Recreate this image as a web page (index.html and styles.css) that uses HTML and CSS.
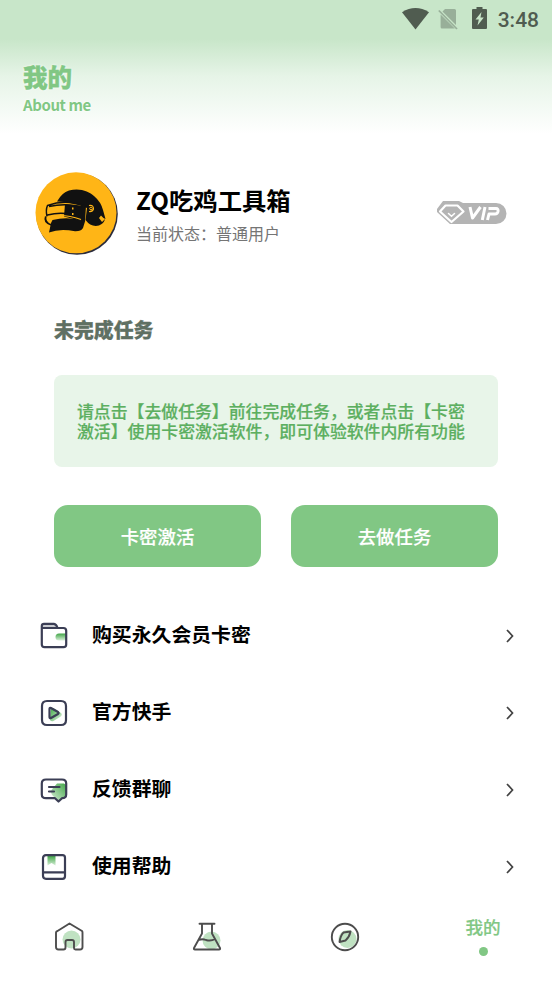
FILE: index.html
```html
<!DOCTYPE html>
<html lang="zh-CN">
<head>
<meta charset="utf-8">
<title>我的</title>
<link rel="stylesheet" href="styles.css">
</head>
<body>
<div class="screen">
  <header class="header">
    <div class="status">
      <svg class="wifi" width="27" height="22" viewBox="0 0 27 22"><path d="M0 4.2Q13.5-4 27 4.2L13.5 21.5Z"/></svg>
      <svg class="sim" width="20" height="22" viewBox="0 0 20 22"><path d="M7 1h9.5q1.500 0 1.500 1.500V17L4.500 3.500ZM2.600 6.500 16.800 20.500H4q-1.400 0-1.400-1.500Z"/><path class="slash" d="M.8 2.500 19 21"/></svg>
      <svg class="battery" width="15" height="22" viewBox="0 0 15 22"><path fill-rule="evenodd" d="M4.500 0h6v2H14q1 0 1 1v18q0 1-1 1H1q-1 0-1-1V3q0-1 1-1h3.500ZM9.500 5 3.500 12.500h3.300L5.500 18.500 11.800 10.500H8.500Z"/></svg>
      <span class="time">3:48</span>
    </div>
    <h1>我的</h1>
    <p>About me</p>
  </header>

  <section class="profile">
    <svg class="avatar" width="83" height="83" viewBox="0 0 83 83">
      <circle cx="42" cy="42" r="40.800" fill="#2b2c3c"/>
      <circle cx="41" cy="40.800" r="40.500" fill="#ffb516"/>
      <path fill="#111" d="M22 29.500Q27 20.500 34 18.500C45 15.500 54 19.500 59 24Q66 30 68 38L70.500 47Q68 46 66 43.500L64 46 67 50 70 47Q69 51.500 64 53.500 56 55.500 50.500 48L52 36Q36 30 22 29.500Z"/>
      <path fill="#111" d="M30 32 51 34.500 50 50 29 44.500Z"/>
      <path fill="none" stroke="#111" stroke-width="1.500" d="M52 34.500Q31 26.500 12.500 33.500 10.500 38 12 44.500M50 35.500Q31 30.500 14 34.500M12.500 43Q22 40.500 31 41.500"/>
      <path fill="#111" d="M11.500 45Q10.500 49 15.500 52L17.500 48Q34 44 50 49.500L48 56Q46 59.500 40 59.300 25 56 14 60.500L15.500 53.500Q7.500 50.500 10 44Z"/>
      <path fill="none" stroke="#ffb516" stroke-width="1.200" d="M13 45Q28 41 46 47.500M54 33.500Q58.500 32.500 58.500 37 57.500 40 54 39.500"/>
      <circle cx="56" cy="36.500" r="1.300" fill="none" stroke="#ffb516"/>
      <path fill="#ffb516" d="M37 35.500h1.500v2H37zM37 41h1.500v2H37z"/>
    </svg>
    <div class="who">
      <h2>ZQ吃鸡工具箱</h2>
      <p>当前状态：普通用户</p>
    </div>
    <svg class="vip" width="70" height="26" viewBox="0 0 70 26">
      <path fill="#b4b4b4" d="M6 0H22L26 2H59a10.500 10.500 0 0 1 0 21H13L0 11V8Z"/>
      <path fill="none" stroke="#fff" stroke-width="2.200" stroke-linejoin="round" d="M8.500 4.500H20.500L26.500 10.500 14.500 21 3 10.500Z"/>
      <path fill="none" stroke="#fff" stroke-width="1.500" stroke-linecap="round" d="M11.500 12.500 14.500 15.300 17.500 12.500"/>
      <path fill="none" stroke="#fff" stroke-width="3" stroke-linejoin="round" d="M33 6 35.500 17 43.500 6M48 6 45.300 19M50.500 19 52 13H58Q60.500 13 61 10.500 61.500 7.500 59 7.500H51.500"/>
    </svg>
  </section>

  <section class="task">
    <h3>未完成任务</h3>
    <div class="notice">请点击【去做任务】前往完成任务，或者点击【卡密激活】使用卡密激活软件，即可体验软件内所有功能</div>
    <div class="actions">
      <button>卡密激活</button>
      <button>去做任务</button>
    </div>
  </section>

  <svg class="defs" width="0" height="0">
    <linearGradient id="down" x1="0" y1="0" x2="0" y2="1"><stop offset="0" stop-color="#42a648"/><stop offset="1" stop-color="#d8efd9"/></linearGradient>
    <linearGradient id="diag" x1="0" y1="0" x2="1" y2="1"><stop offset="0" stop-color="#3fa946"/><stop offset="1" stop-color="#e0f3e0"/></linearGradient>
    <linearGradient id="side" x1="1" y1="0" x2="0" y2="1"><stop offset="0" stop-color="#42a648"/><stop offset="1" stop-color="#d8efd9"/></linearGradient>
  </svg>

  <ul class="menu">
    <li>
      <svg class="icon" width="28" height="28" viewBox="0 0 28 28"><path fill="#c9cbd0" d="M2 6V4Q2 2 4 2H14.500L17.500 6Z"/><path fill="url(#down)" d="M26 11.500H19q-3.500 0-3.500 3.500t3.500 3.500h7Z"/><path class="line" d="M1.800 6V4Q1.800 1.800 4 1.800H14Q16.500 2 17.500 6M1.800 6H23.500Q26.200 6 26.200 8.700V22.500Q26.200 25.200 23.500 25.200H4.500Q1.800 25.200 1.800 22.500Z"/></svg>
      <span>购买永久会员卡密</span>
      <svg class="arrow" width="10" height="16" viewBox="0 0 10 16"><path d="M2 2 7.500 8 2 14"/></svg>
    </li>
    <li>
      <svg class="icon" width="28" height="28" viewBox="0 0 28 28"><path fill="url(#diag)" d="M11 10.500Q11 8 14 9.500L21 14Q23 16 20 18L13.500 22Q10 23 10 20Z"/><path class="line" d="M7 2H21Q26 2 26 7V21Q26 26 21 26H7Q2 26 2 21V7Q2 2 7 2ZM9.500 10Q9.500 8.500 11 9L18 13Q19.200 14 18 15L11 19Q9.500 19.500 9.500 18Z"/></svg>
      <span>官方快手</span>
      <svg class="arrow" width="10" height="16" viewBox="0 0 10 16"><path d="M2 2 7.500 8 2 14"/></svg>
    </li>
    <li>
      <svg class="icon" width="28" height="28" viewBox="0 0 28 28"><path fill="url(#side)" d="M17 7.500H24Q27 9 26 13V21L19 25 13 20Q9 16 13 12Z"/><path class="line" d="M6 3.500H22Q26.200 3.500 26.200 7.500V18.500Q26.200 22.200 22 22.200L18.500 25.500 15 22.200H6Q1.800 22.200 1.800 18.500V7.500Q1.800 3.500 6 3.500ZM9 11H19.500M9 15.500H14"/></svg>
      <span>反馈群聊</span>
      <svg class="arrow" width="10" height="16" viewBox="0 0 10 16"><path d="M2 2 7.500 8 2 14"/></svg>
    </li>
    <li>
      <svg class="icon" width="28" height="28" viewBox="0 0 28 28"><path fill="url(#down)" d="M7.500 3H15.500V12.500L11.500 10 7.500 12.500Z"/><path class="line" d="M6 2.200H22.500Q25 2.200 25 4.700V23.300Q25 25.800 22.500 25.800H6Q3 25.800 3 22.800V5.200Q3 2.200 6 2.200ZM3 19.300H25"/></svg>
      <span>使用帮助</span>
      <svg class="arrow" width="10" height="16" viewBox="0 0 10 16"><path d="M2 2 7.500 8 2 14"/></svg>
    </li>
  </ul>

  <nav class="tabs">
    <a><svg width="30" height="30" viewBox="0 0 30 30"><circle class="tint" cx="17.500" cy="17.500" r="9"/><path d="M3.500 9 15.500 1.500 28 9Q28.500 9.500 28.500 10.500V25Q28.500 27.500 26 27.500H21.500Q20 27.500 20 26V20Q20 18 18 18H13.500Q11.500 18 11.500 20V25.500Q11.500 27.500 9.500 27.500H4.500Q2 27.500 2 25V10.500Q2 9.500 3.500 9Z"/></svg></a>
    <a><svg width="30" height="30" viewBox="0 0 30 30"><circle class="tint" cx="19.500" cy="18.500" r="9"/><path d="M7.500 1.800H22.500M10 2V11.500L2 26Q1.500 27.500 3 27.500H27Q28.500 27.500 28 26L20 11.500V2M7 18Q10.500 16.500 14 18 19 19.500 23 17"/></svg></a>
    <a><svg width="30" height="30" viewBox="0 0 30 30"><circle class="tint" cx="17.500" cy="17" r="9"/><circle cx="15" cy="15" r="13.200"/><path d="M20.500 9.500 13.500 10.500Q10.500 13.500 9.500 20L15.500 18.500Q19.500 15 20.500 9.500Z"/></svg></a>
    <a class="active">我的<i></i></a>
  </nav>
</div>
</body>
</html>
```
FILE: styles.css
```css
* { box-sizing: border-box; }
body, h1, h2, h3, p, ul { margin: 0; padding: 0; }
body {
  background: #fff;
  font-family: "Noto Sans CJK SC", "Noto Sans", sans-serif;
}
.screen {
  display: flex;
  flex-direction: column;
  width: 552px;
  height: 983px;
  overflow: hidden;
}
.defs { position: absolute; }

.header {
  height: 138px;
  flex: none;
  background: linear-gradient(#c8e6c9 0, #c8e6c9 39px, #e6f4e7 76px, #fff 134px);
  color: #81c784;
}
.status {
  display: flex;
  align-items: center;
  justify-content: flex-end;
  height: 38px;
  padding-right: 13px;
  fill: #505c50;
  color: #505c50;
}
.wifi { margin-right: 9px; }
.sim { margin-right: 14px; fill: #98af99; }
.slash { stroke: #98af99; stroke-width: 1.700; }
.battery { margin-right: 11px; margin-top: -2px; }
.time {
  font: 500 21px/38px Roboto, sans-serif;
  padding-top: 1px;
}
.header h1 {
  margin: 23px 0 0 23px;
  font-size: 24.500px;
  line-height: 32px;
  font-weight: 900;
  -webkit-text-stroke: .4px;
  text-shadow: 0 0 3px #fff;
}
.header p {
  margin: 1px 0 0 23px;
  font-size: 15px;
  letter-spacing: -.4px;
  line-height: 22px;
  font-weight: 700;
  text-shadow: 0 0 3px #fff;
}

.profile {
  display: flex;
  align-items: flex-start;
  height: 117px;
  flex: none;
  margin-top: 34px;
  padding: 0 45px 0 35px;
}
.who { margin-left: 18px; flex: 1; }
.who h2 {
  margin-top: 10px;
  font-size: 24.300px;
  line-height: 36px;
  font-weight: 700;
  color: #000;
}
.who p {
  margin-top: 3px;
  font-size: 16px;
  line-height: 24px;
  color: #757575;
}
.vip { margin-top: 29px; }

.task { padding: 0 54px; flex: none; }
.task h3 {
  margin-top: 26px;
  font-size: 19.900px;
  line-height: 30px;
  font-weight: 900;
  -webkit-text-stroke: .3px;
  color: #5f7063;
}
.notice {
  height: 92px;
  margin-top: 30px;
  padding: 26px 23px 0;
  border-radius: 8px;
  background: #e8f5e9;
  color: #5caf60;
  font-size: 16.870px;
  line-height: 19.500px;
  font-weight: 500;
  -webkit-text-stroke: .2px;
  word-break: break-all;
}
.actions { display: flex; gap: 30px; margin-top: 38px; }
.actions button {
  flex: 1;
  height: 62px;
  border: 0;
  padding: 0 0 1px;
  border-radius: 14px;
  background: #81c784;
  color: #fff;
  font: 500 18.400px "Noto Sans CJK SC", sans-serif;
  -webkit-text-stroke: .2px;
}

.menu { list-style: none; margin-top: 31px; }
.menu li {
  display: flex;
  align-items: center;
  height: 76.800px;
  padding: 0 37px 0 40px;
}
.menu span {
  flex: 1;
  margin: -4px 0 0 24px;
  font-size: 19.850px;
  line-height: 30px;
  font-weight: 700;
  color: #000;
}
.line {
  fill: none;
  stroke: #3b3e55;
  stroke-width: 2.200;
  stroke-linejoin: round;
  stroke-linecap: round;
}
.arrow { fill: none; stroke: #424242; stroke-width: 1.700; }

.tabs { display: flex; height: 78px; flex: none; }
.tabs a {
  display: flex;
  flex: 1;
  justify-content: center;
  padding-top: 17px;
}
.tabs svg { fill: none; stroke: #4d4d4d; stroke-width: 1.900; stroke-linejoin: round; stroke-linecap: round; }
.tabs .tint { fill: #c0e2c2; stroke: none; }
.tabs .active {
  flex-direction: column;
  justify-content: flex-start;
  align-items: center;
  padding-top: 9px;
  color: #81c784;
  font-size: 17.600px;
  line-height: 26px;
  font-weight: 500;
  -webkit-text-stroke: .2px;
}
.tabs i {
  width: 9px;
  height: 9px;
  margin-top: 7px;
  border-radius: 50%;
  background: #81c784;
}
```
